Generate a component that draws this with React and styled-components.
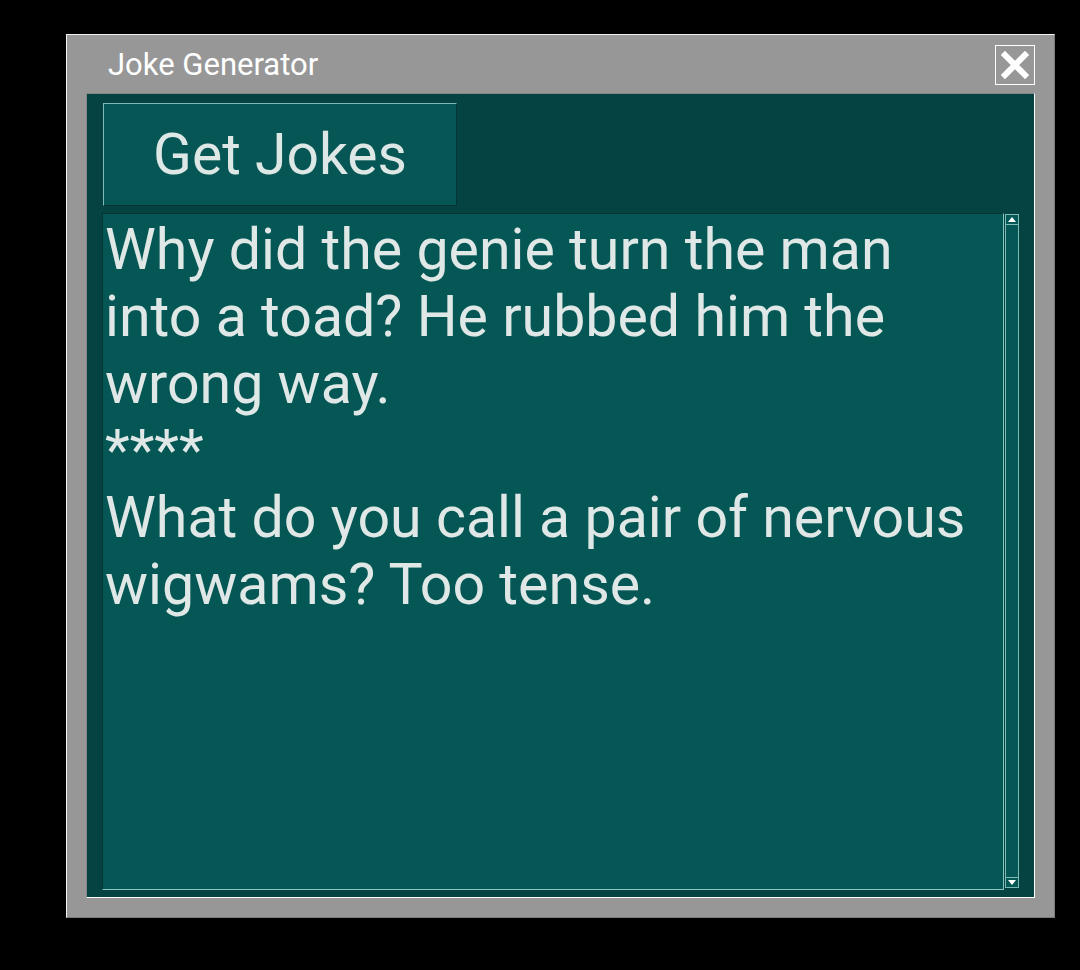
import React from "react";
import styled, { createGlobalStyle } from "styled-components";

const Global = createGlobalStyle`
  html, body { margin: 0; padding: 0; background: #000; }
  body { font-family: Roboto, "Liberation Sans", sans-serif; }
`;

const Page = styled.div`
  width: 1080px;
  height: 970px;
  box-sizing: border-box;
  padding: 34px 0 0 66px;
  background: #000;
`;

const Window = styled.div`
  width: 989px;
  height: 884px;
  box-sizing: border-box;
  background: #979797;
  border-style: solid;
  border-width: 1px;
  border-color: #f2f2f2 #7a7a7a #7a7a7a #f2f2f2;
  display: flex;
  flex-direction: column;
  padding: 0 19px 19px 19px;
`;

const TitleBar = styled.div`
  height: 58px;
  display: flex;
  align-items: center;
  justify-content: space-between;
  padding-left: 22px;
`;

const Title = styled.span`
  color: #ffffff;
  font-size: 31px;
  font-family: Roboto, "Liberation Sans", sans-serif;
`;

const CloseButton = styled.button`
  width: 40px;
  height: 40px;
  box-sizing: border-box;
  margin-top: 1px;
  border: 1px solid #ffffff;
  background: transparent;
  padding: 0;
  display: flex;
  align-items: center;
  justify-content: center;
  cursor: pointer;
`;

const Panel = styled.div`
  flex: 1;
  box-sizing: border-box;
  background: #044342;
  border-style: solid;
  border-width: 1px;
  border-color: #888888 #ffffff #ffffff #888888;
  padding: 9px 15px 7px 15px;
  display: flex;
  flex-direction: column;
  gap: 7px;
`;

const Toolbar = styled.div`
  display: flex;
`;

const ActionButton = styled.button`
  width: 354px;
  height: 103px;
  margin-left: 1px;
  box-sizing: border-box;
  background: #055655;
  border-style: solid;
  border-width: 1px;
  border-color: #7fbab5 #033534 #033534 #7fbab5;
  color: #dde7e5;
  font-family: Roboto, "Liberation Sans", sans-serif;
  font-size: 57px;
  padding: 0;
  cursor: pointer;
`;

const TextRow = styled.div`
  flex: 1;
  display: flex;
  align-items: stretch;
`;

const TextBox = styled.div`
  flex: 1;
  box-sizing: border-box;
  background: #055755;
  border-style: solid;
  border-width: 1px;
  border-color: #033534 #8cc4bf #8cc4bf #033534;
  padding: 2px 8px 0 2px;
  color: #dfe8e6;
  font-family: Roboto, "Liberation Sans", sans-serif;
  font-size: 57.3px;
  line-height: 67px;
  white-space: pre-wrap;
  overflow: hidden;
`;

const ScrollBar = styled.div`
  width: 14px;
  margin: 1px 0 2px 1px;
  box-sizing: border-box;
  display: flex;
  flex-direction: column;
`;

const ScrollArrow = styled.div`
  height: 11px;
  box-sizing: border-box;
  border: 1px solid #7fbab5;
  background: #055755;
  display: flex;
  align-items: center;
  justify-content: center;
`;

const ScrollTrack = styled.div`
  flex: 1;
  box-sizing: border-box;
  border-left: 1px solid #7fbab5;
  border-right: 1px solid #7fbab5;
  background: #055755;
`;

const Tri = ({ down }) => (
  <svg width="8" height="5" viewBox="0 0 8 5">
    {down ? (
      <polygon points="0,0 8,0 4,5" fill="#ffffff" />
    ) : (
      <polygon points="4,0 8,5 0,5" fill="#ffffff" />
    )}
  </svg>
);

const jokes = `Why did the genie turn the man into a toad? He rubbed him the wrong way.
****
What do you call a pair of nervous wigwams? Too tense.`;

export default function App() {
  return (
    <>
      <Global />
      <Page>
        <Window>
          <TitleBar>
            <Title>Joke Generator</Title>
            <CloseButton aria-label="Close">
              <svg width="28" height="28" viewBox="0 0 28 28">
                <path
                  d="M4 4 L24 24 M24 4 L4 24"
                  stroke="#ffffff"
                  strokeWidth="6"
                  strokeLinecap="square"
                />
              </svg>
            </CloseButton>
          </TitleBar>
          <Panel>
            <Toolbar>
              <ActionButton>Get Jokes</ActionButton>
            </Toolbar>
            <TextRow>
              <TextBox>{jokes}</TextBox>
              <ScrollBar>
                <ScrollArrow>
                  <Tri />
                </ScrollArrow>
                <ScrollTrack />
                <ScrollArrow>
                  <Tri down />
                </ScrollArrow>
              </ScrollBar>
            </TextRow>
          </Panel>
        </Window>
      </Page>
    </>
  );
}
